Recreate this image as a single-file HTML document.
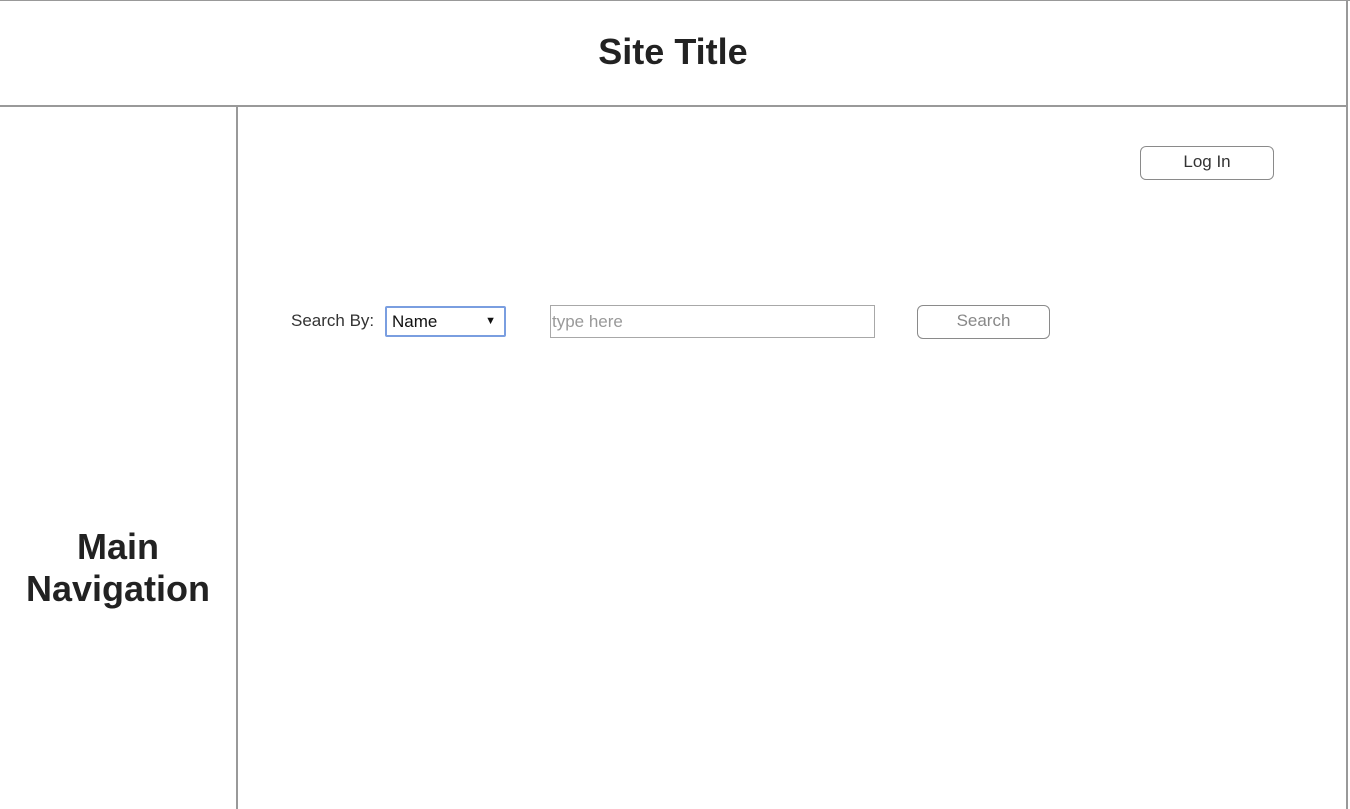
<!DOCTYPE html>
<html><head><style>
body{margin:0;width:1350px;height:809px;background:#fff;position:relative;overflow:hidden;font-family:"Liberation Sans",Arial,sans-serif;}
.a{position:absolute;}
.btn{border:1px solid #8a8a8a;border-radius:6px;box-sizing:border-box;text-align:center;font-size:17px;}
</style></head><body>
<div class="a" style="left:0;top:0;width:1350px;height:1px;background:#999"></div>
<div class="a" style="left:0;top:105px;width:1347px;height:2px;background:#999"></div>
<div class="a" style="left:1346px;top:0;width:2px;height:809px;background:#999"></div>
<div class="a" style="left:236px;top:106px;width:2px;height:703px;background:#999"></div>
<div class="a" style="left:0;top:31px;width:1346px;text-align:center;font-size:36px;font-weight:bold;color:#222">Site Title</div>
<div class="a" style="left:0;top:526px;width:236px;text-align:center;font-size:36px;font-weight:bold;line-height:42px;color:#222">Main<br>Navigation</div>
<div class="a btn" style="left:1140px;top:146px;width:134px;height:34px;line-height:30px;color:#333">Log In</div>
<div class="a" style="left:291px;top:311px;font-size:17px;color:#333">Search By:</div>
<div class="a" style="left:385px;top:306px;width:121px;height:31px;border:2px solid #7a9ee0;border-radius:2px;box-sizing:border-box;font-size:17px;line-height:27px;padding-left:5px;color:#111">Name<span style="position:absolute;right:8px;font-size:11px">▼</span></div>
<div class="a" style="left:550px;top:305px;width:325px;height:33px;border:1px solid #a8a8a8;box-sizing:border-box;font-size:17px;line-height:31px;padding-left:1px;color:#999">type here</div>
<div class="a btn" style="left:917px;top:305px;width:133px;height:34px;line-height:30px;color:#888">Search</div>
</body></html>
